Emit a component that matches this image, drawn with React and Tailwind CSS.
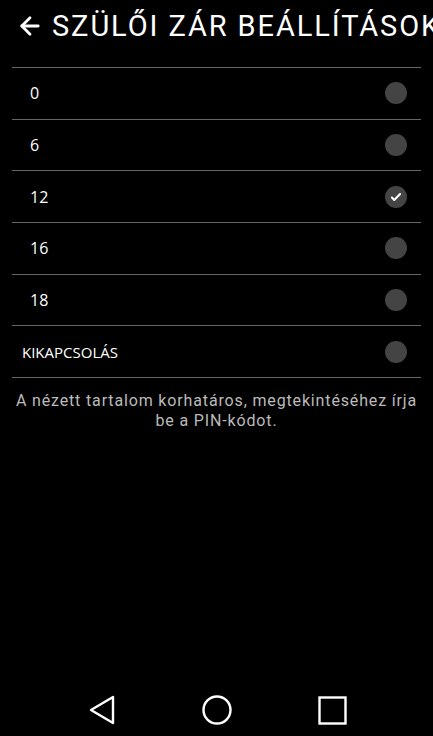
import { ArrowLeft } from 'lucide-react';

const options = [
  { label: '0', indent: true },
  { label: '6', indent: true },
  { label: '12', indent: true, checked: true },
  { label: '16', indent: true },
  { label: '18', indent: true },
  { label: 'KIKAPCSOLÁS' },
];

function Radio({ checked }) {
  return (
    <div className="w-[22px] h-[22px] rounded-full bg-[#444444] flex items-center justify-center">
      {checked && (
        <svg width="14" height="14" viewBox="0 0 24 24" fill="none" stroke="#ffffff" strokeWidth="3.5" strokeLinecap="round" strokeLinejoin="round">
          <path d="M5 13l4 4L19 7" />
        </svg>
      )}
    </div>
  );
}

export default function App() {
  return (
    <div className="w-[433px] h-[736px] bg-black text-white flex flex-col overflow-hidden" style={{ fontFamily: 'Roboto, "Noto Sans", sans-serif' }}>
      {/* Header - title is clipped at the right edge, as on the device */}
      <header className="h-[56px] flex items-center pl-[16px] whitespace-nowrap overflow-hidden">
        <ArrowLeft size={28} strokeWidth={2.4} className="shrink-0 mt-[-4px]" />
        <h1 className="ml-[8px] text-[29px] leading-none tracking-[1.9px] mt-[-4px]">SZÜLŐI ZÁR BEÁLLÍTÁSOK</h1>
      </header>

      {/* Options */}
      <div className="mx-[12px] mt-[11px] border-t border-[#666666]">
        {options.map((o) => (
          <div key={o.label} className="h-[51.7px] flex items-center justify-between border-b border-[#666666]">
            <span className={`${o.indent ? 'pl-[18px] text-[16px]' : 'pl-[10px] text-[15px]'} text-white`} style={{ fontFamily: '"Open Sans", sans-serif' }}>
              {o.label}
            </span>
            <div className="mr-[14px]">
              <Radio checked={o.checked} />
            </div>
          </div>
        ))}
      </div>

      <p className="mt-[13px] px-[12px] text-center text-[16px] leading-[20px] text-[#bbbbbb] tracking-[0.85px]">
        A nézett tartalom korhatáros, megtekintéséhez írja be a PIN-kódot.
      </p>

      <div className="flex-1" />

      {/* Nav bar */}
      <nav className="h-[52px] flex items-center pl-[72px] gap-[55px]">
        <div className="w-[60px] flex justify-center">
          <svg width="26" height="30" viewBox="0 0 26 30" fill="none" stroke="#ffffff" strokeWidth="2.4" strokeLinejoin="round">
            <path d="M24 2 L2 15 L24 28 Z" />
          </svg>
        </div>
        <div className="w-[60px] flex justify-center">
          <svg width="30" height="30" viewBox="0 0 30 30" fill="none" stroke="#ffffff" strokeWidth="2.4">
            <circle cx="15" cy="15" r="13.5" />
          </svg>
        </div>
        <div className="w-[60px] flex justify-center">
          <svg width="29" height="29" viewBox="0 0 29 29" fill="none" stroke="#ffffff" strokeWidth="2.4">
            <rect x="1.5" y="1.5" width="26" height="26" />
          </svg>
        </div>
      </nav>
    </div>
  );
}
